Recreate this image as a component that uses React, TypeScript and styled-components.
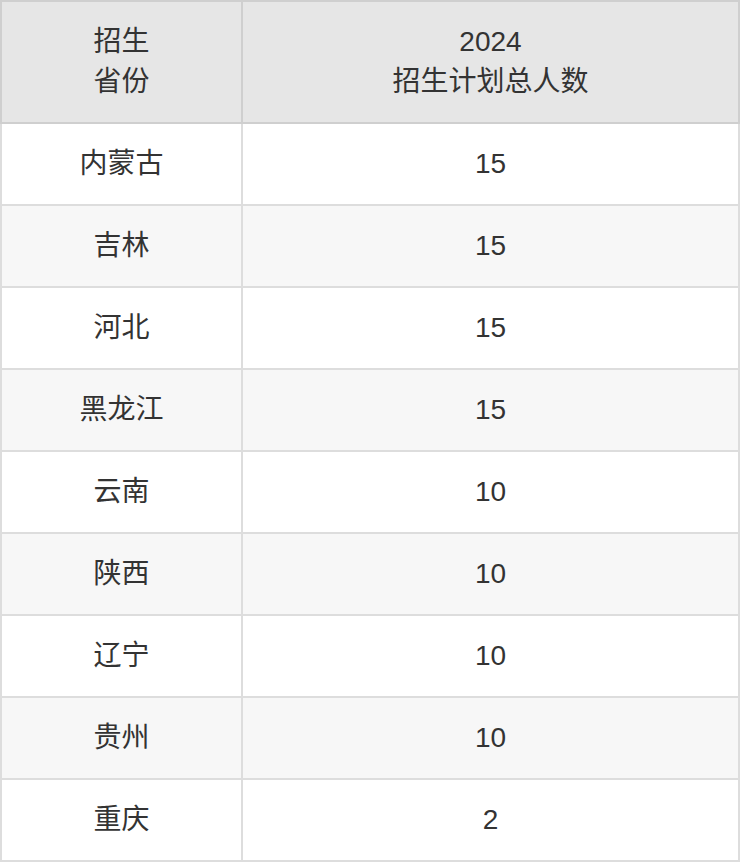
import React from "react";
import styled, { createGlobalStyle } from "styled-components";

const Global = createGlobalStyle`
  html, body { margin: 0; padding: 0; background: #fff; }
  body { font-family: "Liberation Sans", "Noto Sans CJK SC", sans-serif; }
`;

const Table = styled.table`
  width: 740px;
  border-collapse: separate;
  border-spacing: 0;
  table-layout: fixed;
  color: #333;
  font-size: 28px;
  line-height: 40px;
`;

const FirstCol = styled.col`
  width: 243px;
`;

const HeadCell = styled.th`
  box-sizing: border-box;
  background: #e6e6e6;
  font-weight: normal;
  text-align: center;
  padding: 20px 0;
  border-top: 2px solid #cfcfcf;
  border-bottom: 2px solid #cfcfcf;
  border-right: 2px solid #cfcfcf;
  &:first-child { border-left: 2px solid #cfcfcf; }
`;

const Row = styled.tr<{ $alt: boolean }>`
  background: ${(p) => (p.$alt ? "#f7f7f7" : "#ffffff")};
`;

const Cell = styled.td`
  box-sizing: border-box;
  text-align: center;
  padding: 20px 0;
  border-bottom: 2px solid #dddddd;
  border-right: 2px solid #dddddd;
  &:first-child { border-left: 2px solid #dddddd; }
`;

const rows: [string, string][] = [
  ["内蒙古", "15"],
  ["吉林", "15"],
  ["河北", "15"],
  ["黑龙江", "15"],
  ["云南", "10"],
  ["陕西", "10"],
  ["辽宁", "10"],
  ["贵州", "10"],
  ["重庆", "2"],
];

export default function App() {
  return (
    <>
      <Global />
      <Table>
        <colgroup>
          <FirstCol />
          <col />
        </colgroup>
        <thead>
          <tr>
            <HeadCell>
              招生
              <br />
              省份
            </HeadCell>
            <HeadCell>
              2024
              <br />
              招生计划总人数
            </HeadCell>
          </tr>
        </thead>
        <tbody>
          {rows.map(([p, n], i) => (
            <Row key={p} $alt={i % 2 === 1}>
              <Cell>{p}</Cell>
              <Cell>{n}</Cell>
            </Row>
          ))}
        </tbody>
      </Table>
    </>
  );
}
